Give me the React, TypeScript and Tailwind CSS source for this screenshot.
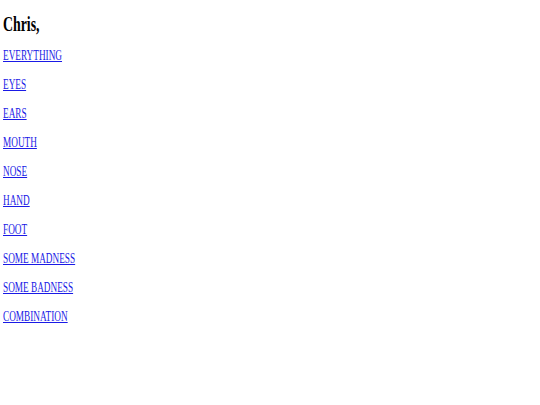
import React from "react";

const items = [
  "EVERYTHING",
  "EYES",
  "EARS",
  "MOUTH",
  "NOSE",
  "HAND",
  "FOOT",
  "SOME MADNESS",
  "SOME BADNESS",
  "COMBINATION",
];

export default function App() {
  return (
    <div className="w-[540px] h-[405px] bg-white pl-[3px] pt-[14px] font-['Liberation_Serif','Times_New_Roman',serif]">
      <div className="origin-top-left scale-x-[0.66] w-[700px]">
        <h2 className="text-[21px] leading-[21px] font-bold text-black">Chris,</h2>
        <div className="mt-[13px] flex flex-col gap-[13px]">
          {items.map((t) => (
            <a
              key={t}
              href="#"
              className="block text-[14px] leading-[16px] text-[#1a1ae6] underline w-fit"
            >
              {t}
            </a>
          ))}
        </div>
      </div>
    </div>
  );
}
